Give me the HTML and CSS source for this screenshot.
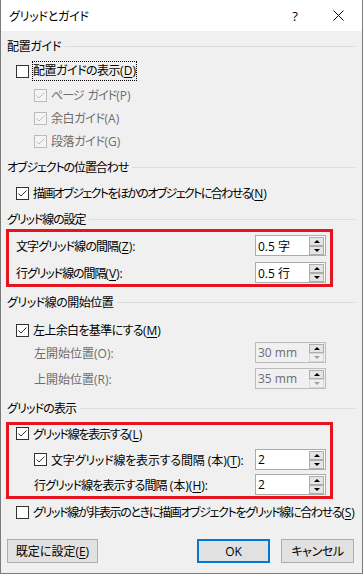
FILE: index.html
```html
<!DOCTYPE html>
<html lang="ja">
<head>
<meta charset="utf-8">
<title>グリッドとガイド</title>
<link rel="stylesheet" href="styles.css">
</head>
<body>
<div class="dialog">
  <div class="titlebar">
    <span class="title">グリッドとガイド</span>
    <span class="help">?</span>
    <svg class="close" width="11" height="11" viewBox="0 0 11 11"><path d="M0.5 0.5 L10.5 10.5 M10.5 0.5 L0.5 10.5" stroke="#000" stroke-width="1" fill="none"/></svg>
  </div>

  <div class="content">
    <div class="head h1">配置ガイド</div>
    <div class="row in1 r1"><span class="cb"></span><span class="label focus t05">配置ガイドの表示<span class="ak">(<u>D</u>)</span></span></div>
    <div class="row in2 r2 dim"><span class="cb dis"><svg width="11" height="11" viewBox="0 0 11 11"><path d="M1.5 5.5 L4 8 L9.5 2.5" stroke="#bdbdbd" stroke-width="1" fill="none"/></svg></span><span class="label t10">ページ<span class="sp"> </span>ガイド<span class="ak">(P)</span></span></div>
    <div class="row in2 r3 dim"><span class="cb dis"><svg width="11" height="11" viewBox="0 0 11 11"><path d="M1.5 5.5 L4 8 L9.5 2.5" stroke="#bdbdbd" stroke-width="1" fill="none"/></svg></span><span class="label t04">余白ガイド<span class="ak">(A)</span></span></div>
    <div class="row in2 r3 dim"><span class="cb dis"><svg width="11" height="11" viewBox="0 0 11 11"><path d="M1.5 5.5 L4 8 L9.5 2.5" stroke="#bdbdbd" stroke-width="1" fill="none"/></svg></span><span class="label t04">段落ガイド<span class="ak">(G)</span></span></div>

    <div class="head h2 t11">オブジェクトの位置合わせ</div>
    <div class="row in1 r5"><span class="cb"><svg width="11" height="11" viewBox="0 0 11 11"><path d="M1.5 5.5 L4 8 L9.5 2.5" stroke="#333" stroke-width="1" fill="none"/></svg></span><span class="label t16">描画オブジェクトをほかのオブジェクトに合わせる<span class="ak">(<u>N</u>)</span></span></div>

    <div class="head h2 t11">グリッド線の設定</div>
    <div class="redbox box1">
      <div class="srow s1"><span class="label t09">文字グリッド線の間隔<span class="ak">(<u>Z</u>):</span></span>
        <div class="spin"><span class="val">0.5 字</span><div class="btns"><span class="sb"><i class="up"></i></span><span class="sb"><i class="down"></i></span></div></div>
      </div>
      <div class="srow s2"><span class="label t11">行グリッド線の間隔<span class="ak">(<u>V</u>):</span></span>
        <div class="spin"><span class="val">0.5 行</span><div class="btns"><span class="sb"><i class="up"></i></span><span class="sb"><i class="down"></i></span></div></div>
      </div>
    </div>

    <div class="head h4 t05">グリッド線の開始位置</div>
    <div class="row in1 r7"><span class="cb"><svg width="11" height="11" viewBox="0 0 11 11"><path d="M1.5 5.5 L4 8 L9.5 2.5" stroke="#333" stroke-width="1" fill="none"/></svg></span><span class="label t06">左上余白を基準にする<span class="ak">(<u>M</u>)</span></span></div>
    <div class="srow plain s3 dim"><span class="label">左開始位置<span class="ak">(O):</span></span>
      <div class="spin disabled"><span class="val">30 mm</span><div class="btns"><span class="sb"><i class="up"></i></span><span class="sb off"><i class="down"></i></span></div></div>
    </div>
    <div class="srow plain s4 dim"><span class="label">上開始位置<span class="ak">(R):</span></span>
      <div class="spin disabled"><span class="val">35 mm</span><div class="btns"><span class="sb"><i class="up"></i></span><span class="sb off"><i class="down"></i></span></div></div>
    </div>

    <div class="head h5 t08">グリッドの表示</div>
    <div class="redbox box2">
      <div class="row b2r1"><span class="cb"><svg width="11" height="11" viewBox="0 0 11 11"><path d="M1.5 5.5 L4 8 L9.5 2.5" stroke="#333" stroke-width="1" fill="none"/></svg></span><span class="label t12">グリッド線を表示する<span class="ak">(<u>L</u>)</span></span></div>
      <div class="srow sub s5"><span class="cb"><svg width="11" height="11" viewBox="0 0 11 11"><path d="M1.5 5.5 L4 8 L9.5 2.5" stroke="#333" stroke-width="1" fill="none"/></svg></span><span class="label t02">文字グリッド線を表示する間隔<span class="ak"> (本)(<u>T</u>):</span></span>
        <div class="spin"><span class="val">2</span><div class="btns"><span class="sb"><i class="up"></i></span><span class="sb"><i class="down"></i></span></div></div>
      </div>
      <div class="srow sub s6"><span class="label t09">行グリッド線を表示する間隔<span class="ak"> (本)(<u>H</u>):</span></span>
        <div class="spin"><span class="val">2</span><div class="btns"><span class="sb"><i class="up"></i></span><span class="sb"><i class="down"></i></span></div></div>
      </div>
    </div>
    <div class="row in1 r9"><span class="cb"></span><span class="label t13">グリッド線が非表示のときに描画オブジェクトをグリッド線に合わせる<span class="ak">(<u>S</u>)</span></span></div>
  </div>

  <div class="buttons">
    <span class="btn def">既定に設定<span class="ak">(<u>E</u>)</span></span>
    <span class="btn ok">OK</span>
    <span class="btn cancel t04">キャンセル</span>
  </div>
</div>
</body>
</html>
```
FILE: styles.css
```css
* { box-sizing: border-box; }
html, body { margin: 0; padding: 0; }
body {
  width: 363px;
  height: 574px;
  background: #f0f0f0;
  font-family: "Open Sans", "Noto Sans CJK JP", sans-serif;
  font-size: 12px;
  color: #000;
  font-feature-settings: "palt";
}
u { text-decoration: underline; text-underline-offset: 2px; }

.t02 { letter-spacing: -0.2px; }
.t04 { letter-spacing: -0.4px; }
.t05 { letter-spacing: -0.5px; }
.t06 { letter-spacing: -0.65px; }
.t08 { letter-spacing: -0.85px; }
.t09 { letter-spacing: -0.9px; }
.t10 { letter-spacing: -1px; }
.t11 { letter-spacing: -1.1px; }
.t12 { letter-spacing: -1.25px; }
.t13 { letter-spacing: -1.35px; }
.t16 { letter-spacing: -1.6px; }
.ak { letter-spacing: 0; }
.ak u { letter-spacing: 0; }
.sp { letter-spacing: 0; padding-right: 1px; }

.dialog {
  width: 363px;
  height: 574px;
  border: 1px solid #7a7a7a;
  border-top: none;
  background: #f0f0f0;
  display: flex;
  flex-direction: column;
}

.titlebar {
  flex: none;
  height: 31px;
  background: #fff;
  display: flex;
  align-items: center;
  padding-left: 8px;
}
.title { font-size: 12px; letter-spacing: -0.25px; }
.help {
  margin-left: auto;
  width: 12px;
  text-align: center;
  font-size: 13px;
  margin-right: 32px;
}
.close { display: block; margin-right: 18px; flex: none; }

.content {
  flex: none;
  padding: 0 7px 0 6px;
}

.head {
  height: 20px;
  display: flex;
  align-items: center;
  white-space: nowrap;
}
.head::after {
  content: "";
  flex: 1;
  height: 1px;
  margin-left: 4px;
  background: #dcdcdc;
}
.h1 { margin-top: 5px; letter-spacing: -0.3px; }
.h2 { margin-top: 5px; }
.h4 { margin-top: 5px; }
.h5 { margin-top: 9px; }

.row {
  height: 22px;
  display: flex;
  align-items: center;
  white-space: nowrap;
}
.in1 { padding-left: 9px; }
.in2 { padding-left: 27px; }
.r1 { margin-top: 4px; }
.r2 { margin-top: 2px; }
.r3 { margin-top: 1px; }
.r5 { margin-top: 5px; }
.r7 { margin-top: 7px; }
.r9 { margin-top: 2px; }

.dim { color: #6d6d6d; }

.cb {
  flex: none;
  width: 13px;
  height: 13px;
  border: 1px solid #333;
  background: #fff;
  margin-right: 4px;
  display: flex;
}
.cb svg { display: block; }
.cb.dis { border-color: #bcbcbc; background: #f4f4f4; }

.label { white-space: nowrap; }
.focus {
  line-height: 18px;
  outline: 1px dotted #000;
}

.redbox {
  border: 3px solid #e5141f;
  margin-left: -1px;
  width: 327px;
}
.box1 { padding: 3px 4px 1px 7px; }
.box2 { margin-top: 4px; padding: 0 4px 1px 7px; }

.srow {
  height: 21px;
  display: flex;
  align-items: center;
  white-space: nowrap;
}
.srow .spin { margin-left: auto; }
.s2 { margin-top: 6px; }
.plain { padding-left: 27px; padding-right: 29px; }
.s3 { margin-top: 1px; }
.s4 { margin-top: 5px; }

.b2r1 { height: 17px; }
.sub { padding-left: 18px; }
.s5 { margin-top: 7px; }
.s6 { margin-top: 4px; }

.spin {
  flex: none;
  width: 71px;
  height: 21px;
  border: 1px solid #ababab;
  background: #fff;
  display: flex;
  align-items: center;
  color: #000;
  letter-spacing: 0;
}
.spin .val { flex: 1; padding-left: 2px; font-size: 12px; }
.btns {
  flex: none;
  align-self: stretch;
  display: flex;
  flex-direction: column;
  padding: 1px 1px 0 0;
}
.sb {
  width: 15px;
  height: 9px;
  border: 1px solid #adadad;
  background: #e5e5e5;
  display: flex;
  align-items: center;
  justify-content: center;
}
.up, .down {
  display: block;
  width: 0;
  height: 0;
  border-left: 3px solid transparent;
  border-right: 3px solid transparent;
}
.up { border-bottom: 3px solid #000; }
.down { border-top: 3px solid #000; }

.spin.disabled { background: #f0f0f0; border-color: #bcbcbc; color: #6d6d6d; }
.sb.off { background: #f0f0f0; border-color: #d5d5d5; }
.sb.off .down { border-top-color: #a0a0a0; }

.buttons {
  flex: none;
  margin-top: 16px;
  display: flex;
  padding: 0 8px 0 6px;
}
.btn {
  height: 24px;
  border: 1px solid #adadad;
  background: #e1e1e1;
  display: flex;
  align-items: center;
  justify-content: center;
  white-space: nowrap;
}
.def { width: 91px; }
.ok { width: 73px; margin-left: auto; border: 2px solid #0078d7; }
.cancel { width: 73px; margin-left: 11px; }
```
